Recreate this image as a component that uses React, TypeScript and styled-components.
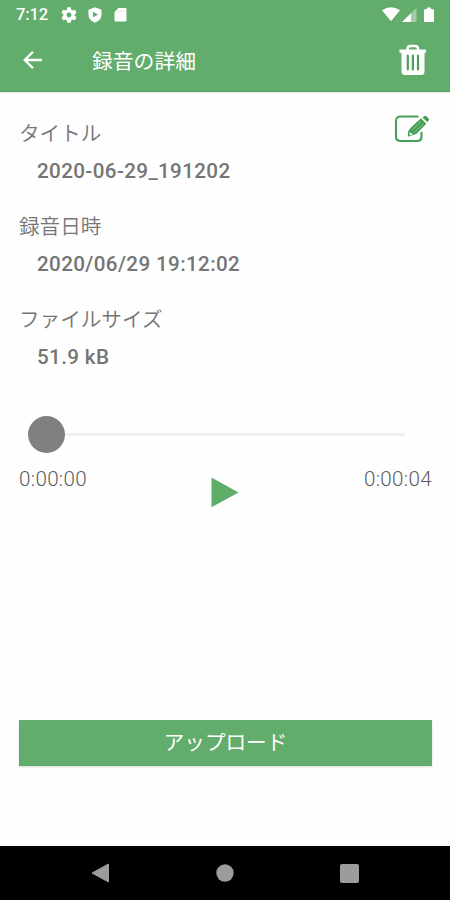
import React from 'react';
import styled, { createGlobalStyle } from 'styled-components';

const green = '#62ac6c';

const GlobalStyle = createGlobalStyle`
  * { box-sizing: border-box; }
  body { margin: 0; background: #fff; }
`;

const Screen = styled.div`
  width: 450px;
  height: 900px;
  display: flex;
  flex-direction: column;
  overflow: hidden;
  background: #fefefe;
  color: #757575;
  font-family: Roboto, 'Noto Sans CJK JP', sans-serif;
  font-size: 20.6px;
`;

const StatusBar = styled.div`
  height: 29px;
  flex: none;
  display: flex;
  align-items: center;
  padding: 0 15px 0 16px;
  background: ${green};
  color: #fff;
`;

const Clock = styled.span`
  width: 45px;
  font-size: 16.6px;
  font-weight: 500;
  line-height: 30px;
  padding-top: 1px;
  letter-spacing: -0.2px;
`;

const Notifications = styled.div`
  display: flex;
  gap: 11px;
`;

const Signals = styled.div`
  display: flex;
  margin-left: auto;
`;

const Header = styled.header`
  height: 63px;
  flex: none;
  display: flex;
  align-items: center;
  padding: 0 23px 0 21px;
  background: ${green};
  border-bottom: 1px solid #55a160;
  box-shadow: 0 1px 1px #e6efec;
  color: #fff;
`;

const Title = styled.h1`
  margin: 0 auto 0 47px;
  padding-top: 3px;
  font-size: 20.8px;
  font-weight: 400;
  line-height: 30px;
`;

const IconButton = styled.button`
  display: flex;
  padding: 0;
  border: 0;
  background: none;
  color: inherit;
`;

const Content = styled.main`
  flex: 1;
  display: flex;
  flex-direction: column;
  padding: 22px 18px 80px 19px;
`;

const Details = styled.section`
  display: flex;
  justify-content: space-between;
  align-items: flex-start;
`;

const Fields = styled.dl`
  margin: 0;
  display: flex;
  flex-direction: column;
  gap: 16px;
`;

const Field = styled.div`
  height: 77px;
`;

const Label = styled.dt`
  height: 38px;
  line-height: 41px;
  font-weight: 350;
`;

const Value = styled.dd`
  margin: 0 0 0 18px;
  line-height: 39px;
  font-weight: 500;
  letter-spacing: 0.38px;
`;

const EditButton = styled(IconButton)`
  color: #45a055;
  margin-right: 2px;
`;

const Slider = styled.div`
  height: 37px;
  margin: 39px 27px 0 9px;
  display: flex;
  align-items: center;
`;

const Thumb = styled.div`
  width: 37px;
  height: 37px;
  border-radius: 50%;
  background: #808080;
`;

const Track = styled.div`
  flex: 1;
  height: 3px;
  background: #efefef;
`;

const Playback = styled.div`
  display: flex;
  justify-content: space-between;
  margin-top: 13px;
`;

const Time = styled.span`
  line-height: 26px;
  font-weight: 300;
  color: #5c5c5c;
  letter-spacing: 0.32px;
`;

const PlayButton = styled(IconButton)`
  margin: 11px 2px 0 0;
`;

const UploadButton = styled.button`
  height: 46px;
  margin-top: auto;
  padding: 0;
  border: 0;
  background: ${green};
  box-shadow: 0 1px 2px #d3dcd4;
  color: #fff;
  font: 400 20.6px/46px Roboto, 'Noto Sans CJK JP', sans-serif;
`;

const NavBar = styled.nav`
  height: 54px;
  flex: none;
  display: flex;
  justify-content: space-between;
  align-items: center;
  padding: 0 91px;
  background: #000;
  color: #9c9c9c;
`;

const fields = [
  { label: 'タイトル', value: '2020-06-29_191202' },
  { label: '録音日時', value: '2020/06/29 19:12:02' },
  { label: 'ファイルサイズ', value: '51.9 kB' },
];

const GearIcon = () => (
  <svg width="16" height="16" viewBox="2 2 20 20" fill="currentColor">
    <path d="M19.14 12.94c.04-.3.06-.61.06-.94 0-.32-.02-.64-.07-.94l2.03-1.58c.18-.14.23-.41.12-.61l-1.92-3.32c-.12-.22-.37-.29-.59-.22l-2.39.96c-.5-.38-1.03-.7-1.62-.94l-.36-2.54c-.04-.24-.24-.41-.48-.41h-3.84c-.24 0-.43.17-.47.41l-.36 2.54c-.59.24-1.13.57-1.62.94l-2.39-.96c-.22-.08-.47 0-.59.22L2.74 8.87c-.12.21-.08.47.12.61l2.03 1.58c-.05.3-.09.63-.09.94s.02.64.07.94l-2.03 1.58c-.18.14-.23.41-.12.61l1.92 3.32c.12.22.37.29.59.22l2.39-.96c.5.38 1.03.7 1.62.94l.36 2.54c.05.24.24.41.48.41h3.84c.24 0 .44-.17.47-.41l.36-2.54c.59-.24 1.13-.56 1.62-.94l2.39.96c.22.08.47 0 .59-.22l1.92-3.32c.12-.22.07-.47-.12-.61l-2.01-1.58zM12 15.1A3.1 3.1 0 1 1 12 8.9a3.1 3.1 0 0 1 0 6.2z" />
  </svg>
);

const ShieldIcon = () => (
  <svg width="15" height="16" viewBox="0 0 15 16">
    <path d="M7 .3 13.500 2.800v4.800c0 3.800-2.600 6.800-6.500 8.100C3.100 14.400.500 11.400.500 7.600V2.800z" fill="#fff" />
    <path d="M5 4.700 10 7.600l-5 3z" fill={green} />
  </svg>
);

const CardIcon = () => (
  <svg width="13" height="16" viewBox="0 0 13 16">
    <path d="M4.500 1H11.500Q12.500 1 12.500 2v11.500q0 1-1 1H1.500q-1 0-1-1V5z" fill="#fff" />
    <path d="M4.600 3v2M7.200 3v2M9.800 3v2" stroke={green} strokeWidth="1" opacity=".35" />
  </svg>
);

const SignalIcons = () => (
  <svg width="53" height="16" viewBox="0 0 53 16" fill="#fff">
    <path d="M0 3.200Q9-2.600 18 3.200L9 14.300z" />
    <path d="M20 15 34.500 1v14z" opacity=".4" />
    <path d="M20 15 29 6.300V15z" />
    <path d="M45 .500h4V2h1.500q1.500 0 1.500 1.500V14q0 1-1 1h-8q-1 0-1-1V3.500Q42 2 43.500 2H45z" />
  </svg>
);

const BackIcon = () => (
  <svg width="24" height="22" viewBox="0 0 24 22" fill="none" stroke="currentColor" strokeWidth="2.300">
    <path d="M21 11H4M12 2.700 3.700 11l8.300 8.300" />
  </svg>
);

const TrashIcon = () => (
  <svg width="28" height="32" viewBox="0 0 28 32" fill="none" stroke="#fff">
    <path d="M8.500 6V5Q8.500 2 11.500 2h4.500Q19 2 19 5V6" strokeWidth="2.600" />
    <path d="M.500 7.200h26.500" strokeWidth="3.400" />
    <path d="M2.500 7h23v20.500q0 3.500-3.500 3.500H6Q2.500 31 2.500 27.500z" fill="#fff" stroke="none" />
    <path d="M8.800 11.500v14M13.900 11.500v14M19 11.500v14" stroke="#4e9d5a" strokeWidth="2.200" strokeLinecap="round" />
  </svg>
);

const EditIcon = () => (
  <svg width="36" height="30" viewBox="0 0 36 30" fill="none" stroke="currentColor">
    <path d="M24.500 2.500H6.500Q2 2.500 2 7v15.500Q2 27 6.500 27H23q4.500 0 4.500-4.500V18" strokeWidth="2.100" />
    <path d="m17 13.500 10-9.300 5.300 5.500L22.300 19.900 13.700 22.700 14.300 17z" fill="currentColor" stroke="none" />
    <path d="m17.500 16.500 9.500-9M19.800 18.800l9.800-9.100" stroke="#9fcda7" strokeWidth=".8" />
    <path d="m15.800 18 3 2.400-3.100 1z" fill="#fefefe" stroke="none" />
    <path d="m28.500 3.500 1.600-1.300q1.200-.9 2.300.1l2.200 2.100q1 1 0 2.200L33.400 8.300z" fill="currentColor" stroke="none" />
  </svg>
);

const PlayIcon = () => (
  <svg width="28" height="31" viewBox="0 0 28 31">
    <path d="M.500.500 27.500 15.400.500 30.300z" fill="#5eae69" />
  </svg>
);

export default function App() {
  return (
    <Screen>
      <GlobalStyle />
      <StatusBar>
        <Clock>7:12</Clock>
        <Notifications>
          <GearIcon />
          <ShieldIcon />
          <CardIcon />
        </Notifications>
        <Signals><SignalIcons /></Signals>
      </StatusBar>
      <Header>
        <IconButton aria-label="戻る"><BackIcon /></IconButton>
        <Title>録音の詳細</Title>
        <IconButton aria-label="削除"><TrashIcon /></IconButton>
      </Header>
      <Content>
        <Details>
          <Fields>
            {fields.map(({ label, value }) => (
              <Field key={label}>
                <Label>{label}</Label>
                <Value>{value}</Value>
              </Field>
            ))}
          </Fields>
          <EditButton aria-label="編集"><EditIcon /></EditButton>
        </Details>
        <Slider>
          <Thumb />
          <Track />
        </Slider>
        <Playback>
          <Time>0:00:00</Time>
          <PlayButton aria-label="再生"><PlayIcon /></PlayButton>
          <Time>0:00:04</Time>
        </Playback>
        <UploadButton>アップロード</UploadButton>
      </Content>
      <NavBar>
        <svg width="19" height="20" viewBox="0 0 19 20"><path d="M1 10 17.500 1v18z" fill="currentColor" stroke="currentColor" strokeLinejoin="round" /></svg>
        <svg width="18" height="18" viewBox="0 0 18 18"><circle cx="9" cy="9" r="8.700" fill="currentColor" /></svg>
        <svg width="19" height="19" viewBox="0 0 19 19"><rect width="19" height="19" rx="2" fill="currentColor" /></svg>
      </NavBar>
    </Screen>
  );
}
